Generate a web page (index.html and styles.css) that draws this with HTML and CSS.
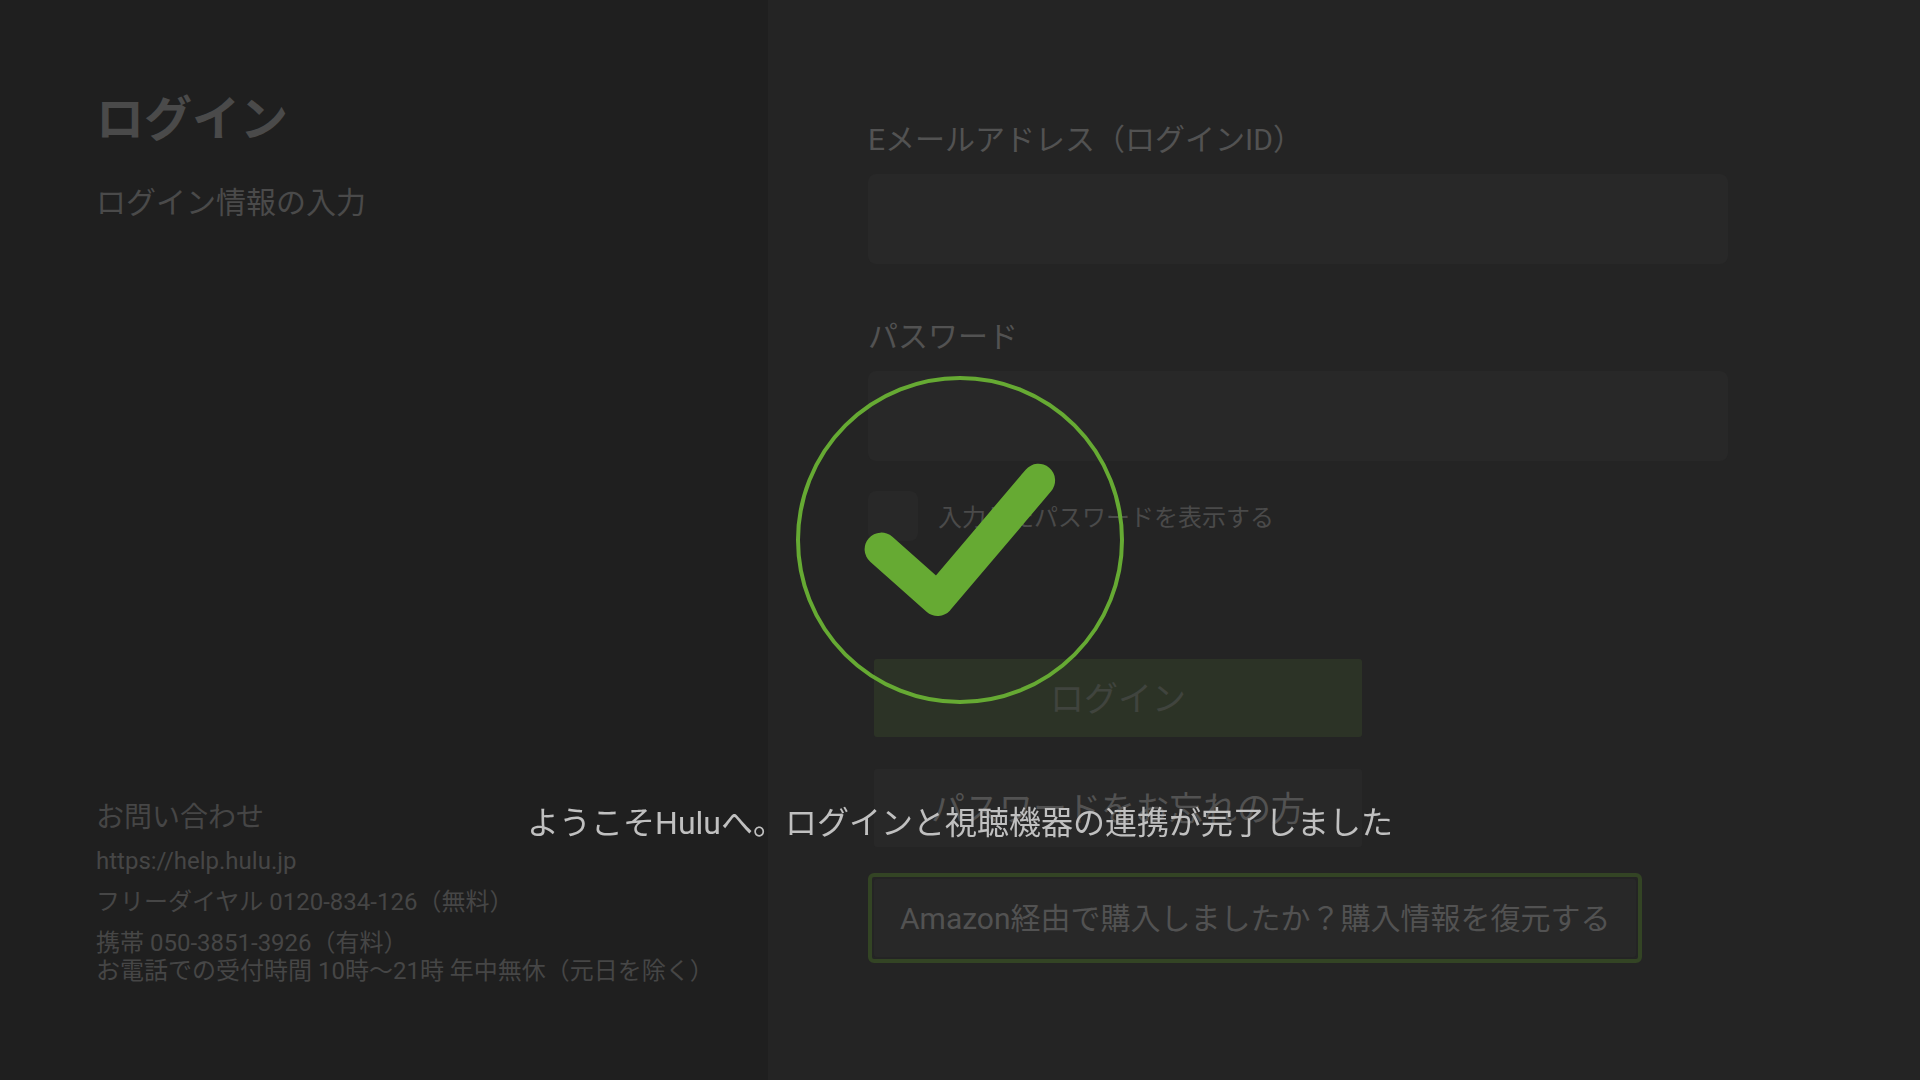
FILE: index.html
```html
<!DOCTYPE html>
<html lang="ja">
<head>
<meta charset="utf-8">
<meta name="viewport" content="width=device-width, initial-scale=1">
<title>ログイン</title>
<link rel="stylesheet" href="styles.css">
</head>
<body>
<div class="page">
  <aside class="side">
    <h1 class="title">ログイン</h1>
    <p class="subtitle">ログイン情報の入力</p>
    <section class="contact">
      <h2 class="contact-title">お問い合わせ</h2>
      <a class="contact-link" href="https://help.hulu.jp">https://help.hulu.jp</a>
      <p>フリーダイヤル 0120-834-126（無料）</p>
      <p>携帯 050-3851-3926（有料）<br>お電話での受付時間 10時～21時 年中無休（元日を除く）</p>
    </section>
  </aside>
  <main class="main">
    <form class="form">
      <div class="field">
        <label class="label" for="email">Eメールアドレス（ログインID）</label>
        <input class="input" id="email" type="email">
      </div>
      <div class="field">
        <label class="label" for="password">パスワード</label>
        <input class="input" id="password" type="password">
      </div>
      <div class="reveal">
        <input class="check" id="reveal" type="checkbox">
        <label class="reveal-label" for="reveal">入力したパスワードを表示する</label>
      </div>
      <div class="actions">
        <div class="frame"><button class="button button-primary" type="submit">ログイン</button></div>
        <div class="frame"><button class="button" type="button">パスワードをお忘れの方</button></div>
        <div class="frame frame-active"><button class="button button-wide" type="button">Amazon経由で購入しましたか？購入情報を復元する</button></div>
      </div>
    </form>
  </main>
</div>
<div class="overlay" role="status">
  <svg class="done" viewBox="0 0 328 328" aria-hidden="true">
    <circle cx="164" cy="164" r="162" fill="none" stroke="#66aa33" stroke-width="4"/>
    <path d="M85.3 173.3L141.6 223.3L242.4 104.5" fill="none" stroke="#66aa33" stroke-width="33.4" stroke-linecap="round" stroke-linejoin="round"/>
  </svg>
  <p class="message">ようこそHuluへ。ログインと視聴機器の連携が完了しました</p>
</div>
</body>
</html>
```
FILE: styles.css
```css
* {
  box-sizing: border-box;
}

body {
  margin: 0;
  background: #242424;
  color: #4a4a4a;
  font-family: Roboto, "Noto Sans CJK JP", sans-serif;
  font-size: 24px;
  line-height: 28px;
}

h1, h2, p {
  margin: 0;
}

.page {
  display: flex;
  min-height: 100vh;
}

.side {
  display: flex;
  flex-direction: column;
  width: 40%;
  padding: 90px 24px 95px 96px;
  background: #1f1f1f;
}

.title {
  font-size: 48px;
  line-height: 60px;
}

.subtitle {
  margin-top: 33px;
  font-size: 30px;
  line-height: 40px;
}

.contact {
  display: flex;
  flex-direction: column;
  align-items: flex-start;
  gap: 13px;
  margin-top: auto;
  color: #464646;
}

.contact-title {
  font-size: 28px;
  font-weight: 400;
  line-height: 32px;
}

.contact-link {
  color: inherit;
  text-decoration: none;
}

.main {
  flex: 1;
  padding: 120px 192px 96px 100px;
}

.form,
.field {
  display: flex;
  flex-direction: column;
}

.field {
  gap: 14px;
  margin-bottom: 53px;
}

.label {
  color: #525252;
  font-size: 30px;
  line-height: 40px;
}

.input {
  width: 100%;
  height: 90px;
  padding: 0 24px;
  border: 0;
  border-radius: 8px;
  background: #282828;
  color: #525252;
  font: inherit;
}

.reveal {
  display: flex;
  align-items: center;
  gap: 20px;
  margin-top: -23px;
}

.reveal-label {
  padding-top: 3px;
}

.check {
  appearance: none;
  width: 50px;
  height: 50px;
  margin: 0;
  border-radius: 8px;
  background: #282828;
}

.actions {
  display: flex;
  flex-direction: column;
  align-items: flex-start;
  gap: 20px;
  margin-top: 112px;
}

.frame {
  display: flex;
  padding: 2px;
  border: 4px solid transparent;
  border-radius: 6px;
}

.frame-active {
  border-color: #334424;
}

.button {
  width: 488px;
  height: 78px;
  padding: 0 0 4px;
  border: 0;
  border-radius: 3px;
  background: #282828;
  color: #525252;
  font-family: inherit;
  font-size: 34px;
}

.button-primary {
  background: #2c3326;
  color: #40443e;
}

.button-wide {
  width: auto;
  padding: 0 25px 4px 26px;
  font-size: 30px;
}

.overlay {
  position: fixed;
  inset: 0;
  display: grid;
  grid-template-rows: 1fr auto 1fr;
  justify-items: center;
}

.done {
  grid-row: 2;
  width: 328px;
  height: 328px;
}

.message {
  grid-row: 3;
  padding-top: 99px;
  color: #c0c0c0;
  font-size: 32px;
  line-height: 40px;
}
```
